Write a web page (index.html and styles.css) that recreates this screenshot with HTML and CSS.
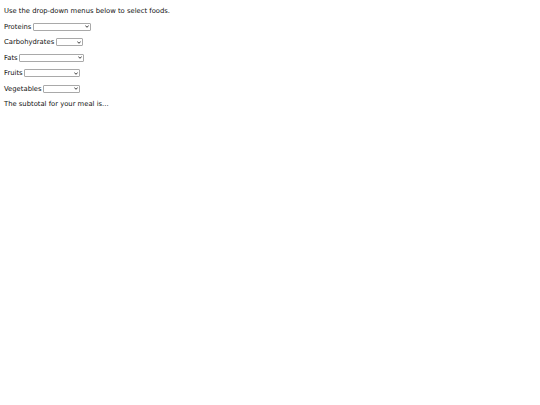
FILE: index.html
```html
<!DOCTYPE html>
<html>
<head>
<meta charset="utf-8">
<link rel="stylesheet" href="styles.css">
</head>
<body>
<div class="page">
  <p class="line">Use the drop-down menus below to select foods.</p>
  <p class="line"><span>Proteins</span><span class="selwrap w-proteins"><select class="sel"><option></option></select><svg class="chev" viewBox="0 0 6 4" width="4" height="3"><path d="M0.5 0.5 L3 3.2 L5.5 0.5" fill="none" stroke="#222" stroke-width="1.3"/></svg></span></p>
  <p class="line"><span>Carbohydrates</span><span class="selwrap w-carbs"><select class="sel"><option></option></select><svg class="chev" viewBox="0 0 6 4" width="4" height="3"><path d="M0.5 0.5 L3 3.2 L5.5 0.5" fill="none" stroke="#222" stroke-width="1.3"/></svg></span></p>
  <p class="line"><span>Fats</span><span class="selwrap w-fats"><select class="sel"><option></option></select><svg class="chev" viewBox="0 0 6 4" width="4" height="3"><path d="M0.5 0.5 L3 3.2 L5.5 0.5" fill="none" stroke="#222" stroke-width="1.3"/></svg></span></p>
  <p class="line"><span>Fruits</span><span class="selwrap w-fruits"><select class="sel"><option></option></select><svg class="chev" viewBox="0 0 6 4" width="4" height="3"><path d="M0.5 0.5 L3 3.2 L5.5 0.5" fill="none" stroke="#222" stroke-width="1.3"/></svg></span></p>
  <p class="line"><span>Vegetables</span><span class="selwrap w-veg"><select class="sel"><option></option></select><svg class="chev" viewBox="0 0 6 4" width="4" height="3"><path d="M0.5 0.5 L3 3.2 L5.5 0.5" fill="none" stroke="#222" stroke-width="1.3"/></svg></span></p>
  <p class="line">The subtotal for your meal is...</p>
</div>
</body>
</html>
```
FILE: styles.css
```css
html, body { margin: 0; padding: 0; background: #fff; }
.page {
  padding: 3.5px 4px;
  font-family: "DejaVu Sans", Verdana, sans-serif;
  font-size: 6.8px;
  color: #111;
}
.line {
  margin: 0;
  height: 15.5px;
  display: flex;
  align-items: center;
  white-space: pre;
}
.selwrap {
  position: relative;
  display: inline-block;
  height: 8px;
  margin-left: 1.5px;
}
.sel {
  -webkit-appearance: none;
  appearance: none;
  display: block;
  width: 100%;
  height: 8px;
  font-size: 5px;
  padding: 0;
  margin: 0;
  box-sizing: border-box;
  border: 1px solid #a9a9a9;
  border-radius: 1px;
  background: #fff;
}
.chev {
  position: absolute;
  right: 2px;
  top: 2.5px;
  pointer-events: none;
}
.w-proteins { width: 58px; }
.w-carbs { width: 27px; }
.w-fats { width: 65px; }
.w-fruits { width: 56px; }
.w-veg { width: 37px; }
```
